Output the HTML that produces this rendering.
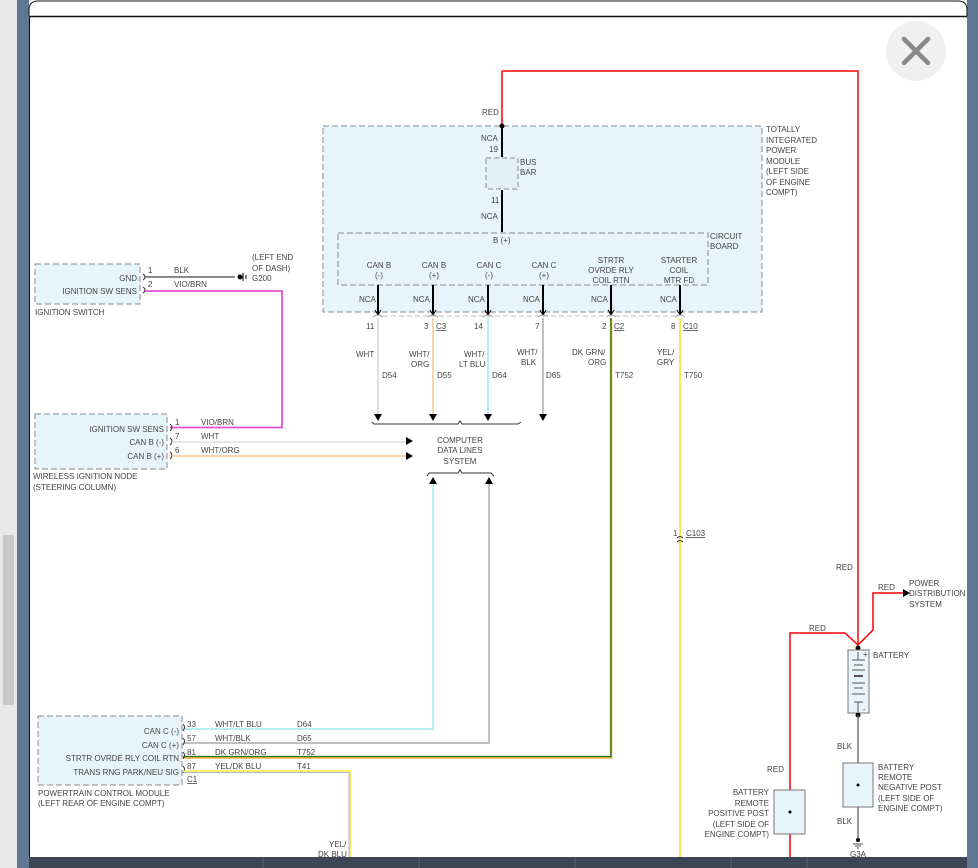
<!DOCTYPE html>
<html><head><meta charset="utf-8"><style>
html,body{margin:0;padding:0;width:978px;height:868px;overflow:hidden;background:#e6e6e6;font-family:"Liberation Sans",sans-serif}
svg{position:absolute;left:0;top:0}
text{font-family:"Liberation Sans",sans-serif;font-size:8px;fill:#444}
</style></head><body>
<svg width="978" height="868" viewBox="0 0 978 868">
<rect x="0" y="0" width="978" height="868" fill="#e8e8e8"/>
<rect x="3" y="535" width="11" height="170" fill="#c8c8c8"/>
<rect x="17" y="0" width="961" height="868" fill="#5f7793"/>
<rect x="29" y="0" width="938" height="868" fill="#fff"/>
<path d="M29 16 V10 Q29 1 38 1 H958 Q967 1 967 10 V16" fill="#fff" stroke="#111" stroke-width="1"/>
<line x1="29" y1="16.5" x2="967" y2="16.5" stroke="#111" stroke-width="1.5"/>
<line x1="29.5" y1="16" x2="29.5" y2="868" stroke="#111"/>
<rect x="29" y="857" width="938" height="11" fill="#3d4654"/>
<g stroke="#5a6372" stroke-width="1"><line x1="263" y1="857" x2="263" y2="868"/><line x1="419" y1="857" x2="419" y2="868"/><line x1="575" y1="857" x2="575" y2="868"/><line x1="731" y1="857" x2="731" y2="868"/><line x1="807" y1="857" x2="807" y2="868"/></g>
<circle cx="916" cy="51" r="30" fill="#f0f0f0"/>
<path d="M904 39 L928 63 M928 39 L904 63" stroke="#888" stroke-width="4.5" stroke-linecap="round"/>

<!-- TIPM -->
<rect x="323" y="126" width="439" height="186" fill="#e8f4fc" stroke="#888" stroke-dasharray="6,3"/>
<rect x="338" y="233" width="370" height="52" fill="#e8f4fc" stroke="#888" stroke-dasharray="6,3"/>
<rect x="486" y="158" width="32" height="31" fill="#e4f0f8" stroke="#888" stroke-dasharray="5,3"/>
<path d="M502 71 H858 V645" fill="none" stroke="#f00" stroke-width="1.5"/>
<line x1="502" y1="71" x2="502" y2="126" stroke="#f00" stroke-width="1.5"/>
<circle cx="502" cy="126" r="2.5" fill="#000"/>
<path d="M502 126 V157 M502 190 V232" stroke="#000" stroke-width="2"/>
<text x="482" y="115">RED</text><text x="481" y="141">NCA</text><text x="489" y="152">19</text>
<text x="520" y="165">BUS</text><text x="520" y="175">BAR</text>
<text x="491" y="203">11</text><text x="481" y="219">NCA</text><text x="493" y="243">B (+)</text>
<text x="710" y="239">CIRCUIT</text><text x="710" y="249">BOARD</text>
<g><text x="766" y="132">TOTALLY</text><text x="766" y="143">INTEGRATED</text><text x="766" y="153">POWER</text><text x="766" y="164">MODULE</text><text x="766" y="174">(LEFT SIDE</text><text x="766" y="185">OF ENGINE</text><text x="766" y="195">COMPT)</text></g>
<g text-anchor="middle">
<text x="379" y="268">CAN B</text><text x="379" y="278">(-)</text>
<text x="434" y="268">CAN B</text><text x="434" y="278">(+)</text>
<text x="489" y="268">CAN C</text><text x="489" y="278">(-)</text>
<text x="544" y="268">CAN C</text><text x="544" y="278">(+)</text>
<text x="611" y="263">STRTR</text><text x="611" y="273">OVRDE RLY</text><text x="611" y="283">COIL RTN</text>
<text x="679" y="263">STARTER</text><text x="679" y="273">COIL</text><text x="679" y="283">MTR FD</text>
</g>
<g stroke="#000" stroke-width="2">
<line x1="378" y1="285" x2="378" y2="314"/><line x1="433" y1="285" x2="433" y2="314"/><line x1="488" y1="285" x2="488" y2="314"/><line x1="543" y1="285" x2="543" y2="314"/><line x1="611" y1="285" x2="611" y2="314"/><line x1="680" y1="285" x2="680" y2="314"/>
</g>
<g fill="none" stroke="#000" stroke-width="1">
<path d="M375 310 L378 315 L381 310 M433 315 M430 310 L433 315 L436 310 M485 310 L488 315 L491 310 M540 310 L543 315 L546 310 M608 310 L611 315 L614 310 M677 310 L680 315 L683 310"/>
</g>
<g fill="none" stroke="#999" stroke-width="1">
<path d="M373 317 Q378 313 383 317 M428 317 Q433 313 438 317 M483 317 Q488 313 493 317 M538 317 Q543 313 548 317 M606 317 Q611 313 616 317 M675 317 Q680 313 685 317"/>
</g>
<line x1="383" y1="316" x2="675" y2="316" stroke="#bbb" stroke-dasharray="5,3"/>
<g><text x="359" y="302">NCA</text><text x="413" y="302">NCA</text><text x="468" y="302">NCA</text><text x="523" y="302">NCA</text><text x="591" y="302">NCA</text><text x="660" y="302">NCA</text></g>
<g><text x="366" y="329">11</text><text x="424" y="329">3</text><text x="436" y="329" text-decoration="underline">C3</text><text x="474" y="329">14</text><text x="535" y="329">7</text><text x="602" y="329">2</text><text x="614" y="329" text-decoration="underline">C2</text><text x="671" y="329">8</text><text x="683" y="329" text-decoration="underline">C10</text></g>
<!-- colored wires -->
<line x1="378" y1="318" x2="378" y2="414" stroke="#d6d6d6" stroke-width="1.5"/>
<line x1="433" y1="318" x2="433" y2="414" stroke="#f5c591" stroke-width="1.5"/>
<line x1="488" y1="318" x2="488" y2="414" stroke="#9fe8ee" stroke-width="1.5"/>
<line x1="543" y1="318" x2="543" y2="414" stroke="#aaa" stroke-width="1.5"/>
<path d="M611 318 V757.5 H183" fill="none" stroke="#f5b040" stroke-width="2.5"/>
<path d="M611 318 V756.5 H183" fill="none" stroke="#1a7a1a" stroke-width="1.3"/>
<line x1="680" y1="318" x2="680" y2="857" stroke="#f5ec3a" stroke-width="1.8"/>
<g fill="#000"><path d="M374 414 H382 L378 421Z M429 414 H437 L433 421Z M484 414 H492 L488 421Z M539 414 H547 L543 421Z"/></g>
<path d="M372 422 L374 424 H458 L460 421 L462 424 H518 L521 422" fill="none" stroke="#333"/>
<g><text x="356" y="357">WHT</text><text x="382" y="378">D54</text>
<text x="409" y="357">WHT/</text><text x="411" y="367">ORG</text><text x="437" y="378">D55</text>
<text x="464" y="357">WHT/</text><text x="459" y="367">LT BLU</text><text x="492" y="378">D64</text>
<text x="517" y="355">WHT/</text><text x="521" y="365">BLK</text><text x="546" y="378">D65</text>
<text x="572" y="355">DK GRN/</text><text x="588" y="365">ORG</text><text x="615" y="378">T752</text>
<text x="657" y="355">YEL/</text><text x="657" y="365">GRY</text><text x="684" y="378">T750</text></g>
<g text-anchor="middle"><text x="460" y="443">COMPUTER</text><text x="460" y="453">DATA LINES</text><text x="460" y="464">SYSTEM</text></g>
<path d="M427 476 L429 473 H458 L460 470 L462 473 H491 L494 476" fill="none" stroke="#333"/>
<g fill="#000"><path d="M429 484 H437 L433 477Z M485 484 H493 L489 477Z M406 437 V445 L413 441Z M406 452 V460 L413 456Z"/></g>
<path d="M433 484 V729 H183" fill="none" stroke="#9fe8ee" stroke-width="1.5"/>
<path d="M489 484 V743 H183" fill="none" stroke="#aaa" stroke-width="1.5"/>
<!-- C103 -->
<path d="M677 538 Q680 535 683 538 M677 542 Q680 539 683 542" fill="none" stroke="#333"/>
<text x="673" y="536">1</text><text x="686" y="536" text-decoration="underline">C103</text>

<!-- ignition switch -->
<rect x="35" y="264" width="105" height="40" fill="#e8f4fc" stroke="#888" stroke-dasharray="6,3"/>
<text x="137" y="281" text-anchor="end">GND</text><text x="137" y="294" text-anchor="end">IGNITION SW SENS</text>
<text x="35" y="315">IGNITION SWITCH</text>
<path d="M143 274 Q147 277 143 280 M143 287 Q147 290 143 293" fill="none" stroke="#333"/>
<text x="148" y="273">1</text><text x="148" y="287">2</text>
<text x="174" y="273">BLK</text><text x="174" y="287">VIO/BRN</text>
<line x1="145" y1="277" x2="235" y2="277" stroke="#444" stroke-width="1.2"/>
<circle cx="240" cy="277" r="2.5" fill="#000"/><path d="M243 273 V281 M246 275 V279" stroke="#000"/>
<text x="252" y="260">(LEFT END</text><text x="252" y="271">OF DASH)</text><text x="252" y="281">G200</text>
<path d="M145 291 H282 V427.5 H170" fill="none" stroke="#e84fd6" stroke-width="1.8"/>

<!-- wireless node -->
<rect x="35" y="414" width="132" height="55" fill="#e8f4fc" stroke="#888" stroke-dasharray="6,3"/>
<g text-anchor="end"><text x="164" y="432">IGNITION SW SENS</text><text x="164" y="445">CAN B (-)</text><text x="164" y="459">CAN B (+)</text></g>
<path d="M170 424 Q174 427 170 431 M170 438 Q174 441 170 445 M170 452 Q174 455 170 459" fill="none" stroke="#333"/>
<text x="175" y="425">1</text><text x="175" y="439">7</text><text x="175" y="453">6</text>
<text x="201" y="425">VIO/BRN</text><text x="201" y="439">WHT</text><text x="201" y="453">WHT/ORG</text>
<line x1="172" y1="442" x2="406" y2="442" stroke="#ddd" stroke-width="1.5"/>
<line x1="172" y1="456" x2="406" y2="456" stroke="#f7c590" stroke-width="1.5"/>
<text x="33" y="479">WIRELESS IGNITION NODE</text><text x="33" y="490">(STEERING COLUMN)</text>

<!-- PCM -->
<rect x="38" y="716" width="144" height="69" fill="#e8f4fc" stroke="#888" stroke-dasharray="6,3"/>
<g text-anchor="end"><text x="179" y="734">CAN C (-)</text><text x="179" y="748">CAN C (+)</text><text x="179" y="761">STRTR OVRDE RLY COIL RTN</text><text x="179" y="775">TRANS RNG PARK/NEU SIG</text></g>
<path d="M183 724 Q186 727 183 731 M183 738 Q186 741 183 745 M183 752 Q186 755 183 759 M183 766 Q186 769 183 773" fill="none" stroke="#333"/>
<g><text x="187" y="727">33</text><text x="187" y="741">57</text><text x="187" y="755">81</text><text x="187" y="769">87</text>
<text x="215" y="727">WHT/LT BLU</text><text x="215" y="741">WHT/BLK</text><text x="215" y="755">DK GRN/ORG</text><text x="215" y="769">YEL/DK BLU</text>
<text x="297" y="727">D64</text><text x="297" y="741">D65</text><text x="297" y="755">T752</text><text x="297" y="769">T41</text>
<text x="187" y="782" text-decoration="underline">C1</text></g>
<path d="M183 771 H350 V857" fill="none" stroke="#f5ec3a" stroke-width="1.5"/>
<path d="M183 772.5 H349 V857" fill="none" stroke="#8aa0d0" stroke-width="0.7"/>
<text x="38" y="796">POWERTRAIN CONTROL MODULE</text><text x="38" y="806">(LEFT REAR OF ENGINE COMPT)</text>
<text x="329" y="847">YEL/</text><text x="318" y="857">DK BLU</text>

<!-- battery side -->
<text x="836" y="570">RED</text>
<path d="M858 645 L873 630 V593 H903" fill="none" stroke="#f00" stroke-width="1.5"/>
<path d="M903 589 V597 L910 593Z" fill="#000"/>
<text x="878" y="590">RED</text>
<text x="909" y="586">POWER</text><text x="909" y="596">DISTRIBUTION</text><text x="909" y="607">SYSTEM</text>
<path d="M858 645 L845 633 H790 V857" fill="none" stroke="#f00" stroke-width="1.5"/>
<text x="809" y="631">RED</text>
<circle cx="858" cy="648" r="2.5" fill="#000"/>
<rect x="848" y="650" width="21" height="63" fill="#e8f4fc" stroke="#777"/>
<g stroke="#555"><line x1="852" y1="660" x2="865" y2="660"/><line x1="854" y1="665" x2="863" y2="665"/><line x1="852" y1="670" x2="865" y2="670"/><line x1="854" y1="676" x2="863" y2="676" stroke-width="2"/><line x1="852" y1="683" x2="865" y2="683"/><line x1="854" y1="688" x2="863" y2="688"/><line x1="852" y1="694" x2="865" y2="694"/><line x1="854" y1="702" x2="863" y2="702"/><line x1="858" y1="652" x2="858" y2="660"/><line x1="858" y1="702" x2="858" y2="712"/></g>
<text x="863" y="657" font-size="7">+</text><text x="863" y="712" font-size="7">-</text>
<text x="873" y="658">BATTERY</text>
<circle cx="858" cy="715" r="2.5" fill="#000"/>
<line x1="858" y1="715" x2="858" y2="840" stroke="#555" stroke-width="1.2"/>
<text x="837" y="749">BLK</text>
<rect x="843" y="763" width="30" height="44" fill="#e8f4fc" stroke="#777"/>
<circle cx="858" cy="785" r="1.5" fill="#000"/>
<text x="878" y="770">BATTERY</text><text x="878" y="780">REMOTE</text><text x="878" y="790">NEGATIVE POST</text><text x="878" y="801">(LEFT SIDE OF</text><text x="878" y="811">ENGINE COMPT)</text>
<text x="837" y="824">BLK</text>
<circle cx="858" cy="840" r="2" fill="#000"/>
<path d="M853 844 H863 M855 846 H861 M857 848 H859" stroke="#555"/>
<text x="850" y="857">G3A</text>
<rect x="774" y="790" width="31" height="44" fill="#e8f4fc" stroke="#777"/>
<circle cx="790" cy="812" r="1.5" fill="#000"/>
<text x="767" y="772">RED</text>
<g text-anchor="end"><text x="769" y="795">BATTERY</text><text x="769" y="806">REMOTE</text><text x="769" y="816">POSITIVE POST</text><text x="769" y="827">(LEFT SIDE OF</text><text x="769" y="837">ENGINE COMPT)</text></g>
</svg>
</body></html>
